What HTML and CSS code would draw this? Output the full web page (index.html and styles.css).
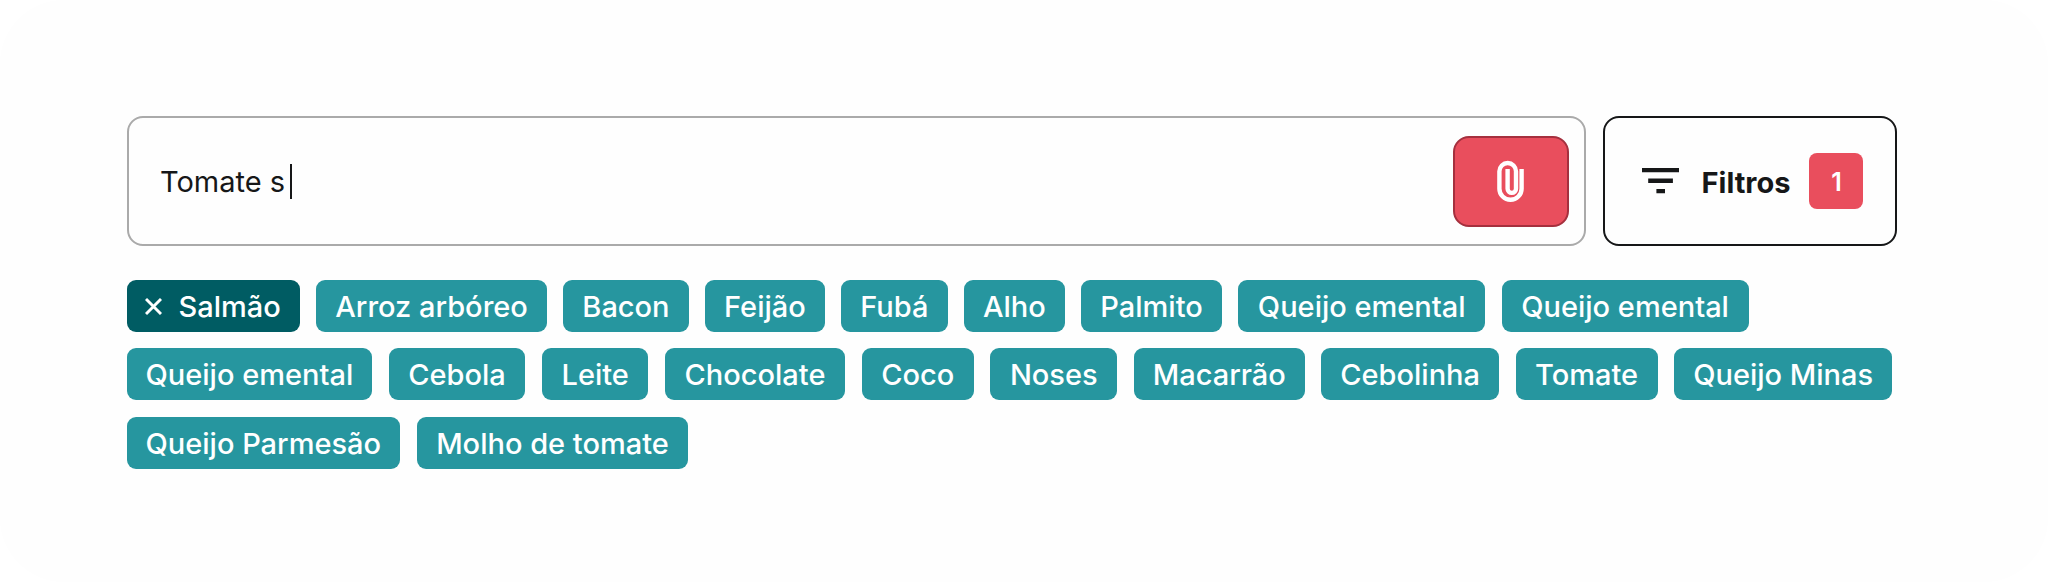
FILE: index.html
```html
<!DOCTYPE html>
<html lang="pt-BR">
<head>
<meta charset="utf-8">
<title>Ingredientes</title>
<link rel="stylesheet" href="styles.css">
</head>
<body>
<main class="panel">
  <div class="search-row">
    <div class="search">
      <span class="query">Tomate s</span><span class="caret"></span>
      <button class="attach" aria-label="Anexar">
        <svg width="28" height="43" viewBox="0 0 28 43" fill="none" stroke="#fff" stroke-width="4.4">
          <path d="M24.600 9v19.700a11.100 11.100 0 0 1-22.200 0V11.300a8.300 8.300 0 0 1 16.600 0v17.400a4.200 4.200 0 0 1-8.400 0V9"/>
        </svg>
      </button>
    </div>
    <button class="filters">
      <svg class="filter-icon" width="37" height="26" viewBox="0 0 37 26" fill="#161718">
        <path d="M0 0h37v4.300H0zM6.200 10.600h24.700v4.300H6.200zM14.400 21h8.600v4.300h-8.600z"/>
      </svg>
      <span class="filters-label">Filtros</span>
      <span class="count">1</span>
    </button>
  </div>
  <div class="tags">
    <span class="tag tag-active"><svg class="close" width="17" height="17" viewBox="0 0 17 17" stroke="#fff" stroke-width="2.900"><path d="M1 1l15 15M16 1L1 16"/></svg>Salmão</span>
    <span class="tag">Arroz arbóreo</span>
    <span class="tag">Bacon</span>
    <span class="tag">Feijão</span>
    <span class="tag">Fubá</span>
    <span class="tag">Alho</span>
    <span class="tag">Palmito</span>
    <span class="tag tag-roomy">Queijo emental</span>
    <span class="tag tag-roomy">Queijo emental</span>
    <span class="tag">Queijo emental</span>
    <span class="tag tag-roomy">Cebola</span>
    <span class="tag tag-roomy">Leite</span>
    <span class="tag tag-roomy">Chocolate</span>
    <span class="tag tag-roomy">Coco</span>
    <span class="tag tag-roomy">Noses</span>
    <span class="tag">Macarrão</span>
    <span class="tag">Cebolinha</span>
    <span class="tag tag-roomy">Tomate</span>
    <span class="tag">Queijo Minas</span>
    <span class="tag">Queijo Parmesão</span>
    <span class="tag tag-roomy">Molho de tomate</span>
  </div>
</main>
</body>
</html>
```
FILE: styles.css
```css
* { box-sizing: border-box; }
body {
  margin: 0;
  background: #fff;
  font-family: Inter, "Liberation Sans", sans-serif;
  color: #161718;
}
.panel {
  width: 2048px;
  height: 582px;
  padding: 116px 151.500px 0 126.500px;
  border-radius: 64px;
  background: #fefefe;
}
.search-row { display: flex; gap: 17px; height: 130px; }
.search {
  flex: 1;
  display: flex;
  align-items: center;
  padding: 0 15px 0 31.500px;
  border: 2px solid #aaa;
  border-radius: 16px;
}
.query { padding-top: 1px; font-size: 29px; font-weight: 400; }
.caret { width: 2px; height: 35px; margin-left: 4.500px; background: #161718; }
.attach {
  display: flex;
  align-items: center;
  justify-content: center;
  width: 116px;
  height: 91px;
  margin-left: auto;
  padding: 0;
  border: 2px solid #a5303e;
  border-radius: 16px;
  background: #e94e5d;
}
.filters {
  display: flex;
  align-items: center;
  width: 294px;
  padding: 0 0 0 37px;
  border: 2px solid #161718;
  border-radius: 16px;
  background: transparent;
  color: inherit;
  font: 700 29px Inter, "Liberation Sans", sans-serif;
}
.filters-label { margin-left: 23px; padding-top: 2px; }
.count {
  display: flex;
  align-items: center;
  justify-content: center;
  width: 54px;
  height: 56px;
  margin-left: 19px;
  padding-top: 2px;
  border-radius: 8px;
  background: #e94e5d;
  color: #fff;
  font-size: 25px;
  font-weight: 600;
}
.tags { display: flex; flex-wrap: wrap; gap: 16.500px; margin-top: 33.500px; }
.tag {
  display: flex;
  align-items: center;
  height: 52px;
  padding: 1px 19px 0;
  border-radius: 9px;
  background: #26969f;
  color: #fff;
  font-size: 29px;
  font-weight: 500;
}
.tag-roomy { padding-inline: 19.600px; }
.tag-active { padding-left: 18px; background: #005c63; }
.close { margin-right: 17px; }
```
